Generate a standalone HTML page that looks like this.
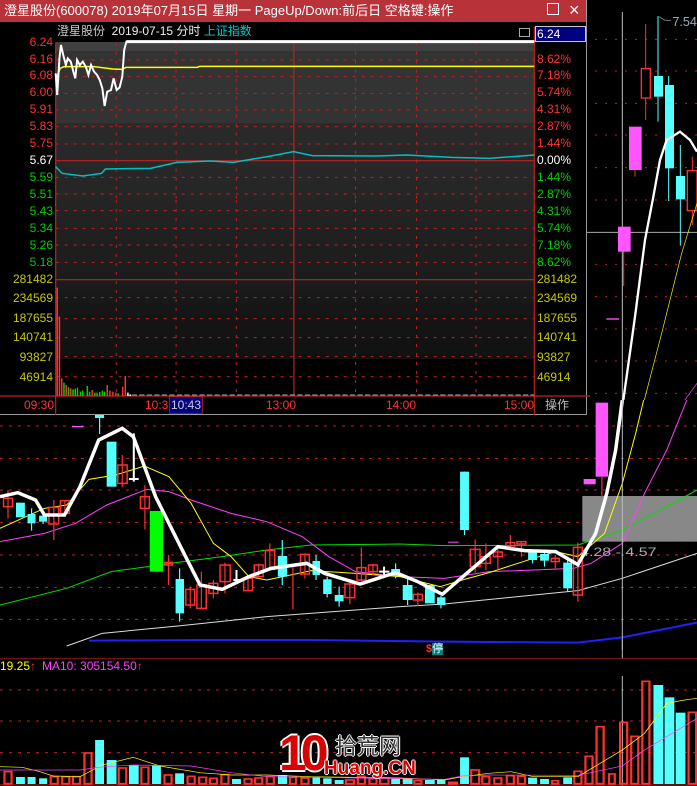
<!DOCTYPE html>
<html><head><meta charset="utf-8">
<style>
*{margin:0;padding:0;box-sizing:border-box}
body{width:697px;height:786px;background:#000;position:relative;overflow:hidden;font-family:"Liberation Sans","Noto Sans CJK SC",sans-serif;font-size:12px}
.a{position:absolute;white-space:nowrap;line-height:14px}
.l{left:0;width:53px;text-align:right}
.r{left:537px}
svg{position:absolute;overflow:hidden}
</style></head><body>

<svg style="left:0;top:400px" width="697" height="250" viewBox="0 0 1568 750" preserveAspectRatio="none">
<g stroke="#c02020" stroke-dasharray="3 6" stroke-width="1">
<path vector-effect="non-scaling-stroke" d="M0 78H1568M0 175H1568M0 270H1568M0 367H1568M0 465H1568M0 562H1568M0 658H1568"/>
</g>
<rect x="1310" y="288" width="258" height="137" fill="#888"/>
<text x="1305" y="468" fill="#aaa" font-size="36" font-family="Liberation Sans">4.28 - 4.57</text>
<g fill="none">
<polyline stroke="#ddd" stroke-width="1" vector-effect="non-scaling-stroke" points="150,738 230,700 400,678 600,650 900,620 1000,612 1300,572 1400,535 1568,460"/>
<polyline stroke="#2020ff" stroke-width="2" vector-effect="non-scaling-stroke" points="200,722 450,720 700,720 1000,725 1300,728 1400,712 1568,668"/>
<polyline stroke="#00e000" stroke-width="1" vector-effect="non-scaling-stroke" points="0,615 150,565 250,515 400,487 500,470 600,450 700,435 900,432 1000,437 1300,435 1400,390 1500,320 1568,270"/>
<polyline stroke="#ff40ff" stroke-width="1" vector-effect="non-scaling-stroke" points="0,425 100,400 170,370 240,315 330,268 380,275 430,300 520,340 600,365 680,410 740,470 800,515 900,530 1000,535 1100,515 1200,510 1290,505 1330,490 1400,430 1450,280 1500,150 1545,0"/>
<polyline stroke="#ffff00" stroke-width="1" vector-effect="non-scaling-stroke" points="0,385 100,325 150,315 200,238 260,225 325,198 380,230 430,310 480,430 520,470 560,530 600,540 700,512 800,520 900,530 990,560 1040,540 1100,518 1200,475 1250,455 1300,470 1360,400 1400,250 1430,100 1448,0"/>
</g>
<g stroke="#ff3030" stroke-width="1.2" fill="none">
<path vector-effect="non-scaling-stroke" d="M18 270V355M121 300V420M146 302V340M275 165V262M326 255V388M379 465V555M428 560V625M453 515V625M480 540V595M506 488V580M558 535V572M582 490V535M607 430V512M659 495V628M686 460V535M787 545V612M813 443V545M839 492V525M940 578V618M1069 418V518M1093 430V510M1120 440V510M1148 405V445M1173 425V470M1249 465V505M1300 428V605M1354 230V290"/>
<g stroke-width="1.5">
<rect vector-effect="non-scaling-stroke" x="8" y="295" width="20" height="25"/><rect vector-effect="non-scaling-stroke" x="110" y="322" width="22" height="50"/><rect vector-effect="non-scaling-stroke" x="136" y="302" width="20" height="38"/><rect vector-effect="non-scaling-stroke" x="265" y="195" width="21" height="55"/><rect vector-effect="non-scaling-stroke" x="316" y="290" width="20" height="35"/><rect vector-effect="non-scaling-stroke" x="370" y="487" width="18" height="8"/><rect vector-effect="non-scaling-stroke" x="418" y="568" width="20" height="47"/><rect vector-effect="non-scaling-stroke" x="443" y="555" width="21" height="70"/><rect vector-effect="non-scaling-stroke" x="470" y="550" width="20" height="30"/><rect vector-effect="non-scaling-stroke" x="495" y="495" width="23" height="50"/><rect vector-effect="non-scaling-stroke" x="548" y="535" width="20" height="37"/><rect vector-effect="non-scaling-stroke" x="572" y="495" width="20" height="35"/><rect vector-effect="non-scaling-stroke" x="597" y="452" width="21" height="56"/><rect vector-effect="non-scaling-stroke" x="676" y="463" width="20" height="59"/><rect vector-effect="non-scaling-stroke" x="776" y="552" width="22" height="41"/><rect vector-effect="non-scaling-stroke" x="803" y="503" width="20" height="37"/><rect vector-effect="non-scaling-stroke" x="829" y="495" width="20" height="20"/><rect vector-effect="non-scaling-stroke" x="930" y="583" width="20" height="17"/><rect vector-effect="non-scaling-stroke" x="1058" y="448" width="22" height="52"/><rect vector-effect="non-scaling-stroke" x="1083" y="470" width="20" height="20"/><rect vector-effect="non-scaling-stroke" x="1110" y="456" width="20" height="14"/><rect vector-effect="non-scaling-stroke" x="1138" y="428" width="20" height="10"/><rect vector-effect="non-scaling-stroke" x="1163" y="425" width="20" height="7"/><rect vector-effect="non-scaling-stroke" x="1240" y="475" width="18" height="10"/><rect vector-effect="non-scaling-stroke" x="1290" y="442" width="20" height="143"/>
</g></g>
<g stroke="#54ffff" stroke-width="1.2">
<path vector-effect="non-scaling-stroke" d="M71 325V392M97 335V372M224 45V102M404 505V665M635 420V555M711 465V540M736 530V592M763 560V620M890 490V535M917 530V615M992 588V625M1045 215V405M1198 450V490M1225 455V500M1277 480V575"/>
</g>
<g fill="#54ffff">
<rect x="36" y="308" width="20" height="44"/><rect x="62" y="342" width="18" height="28"/><rect x="88" y="347" width="18" height="18"/><rect x="214" y="45" width="20" height="7"/><rect x="240" y="125" width="22" height="135"/><rect x="395" y="537" width="19" height="103"/><rect x="625" y="468" width="21" height="62"/><rect x="703" y="483" width="17" height="42"/><rect x="727" y="538" width="19" height="44"/><rect x="753" y="585" width="20" height="19"/><rect x="880" y="507" width="20" height="21"/><rect x="906" y="555" width="22" height="45"/><rect x="956" y="555" width="22" height="55"/><rect x="983" y="592" width="19" height="23"/><rect x="1035" y="215" width="20" height="175"/><rect x="1188" y="455" width="20" height="25"/><rect x="1215" y="462" width="20" height="20"/><rect x="1267" y="488" width="20" height="77"/>
</g>
<rect x="337" y="333" width="30" height="182" fill="#00ff00"/>
<g fill="#ff55ff"><rect x="162" y="78" width="26" height="4"/><rect x="1008" y="425" width="24" height="3"/><rect x="1313" y="237" width="27" height="16"/><rect x="1340" y="8" width="28" height="222"/></g>
<path d="M290 237H312M301 100V245M525 540H540M532 510V548M853 515H876M864 500V530" stroke="#fff" stroke-width="2" vector-effect="non-scaling-stroke"/>
<polyline fill="none" stroke="#fff" stroke-width="3.5" vector-effect="non-scaling-stroke" points="0,290 40,278 80,300 100,345 145,345 180,260 222,120 275,85 300,110 350,290 410,450 450,555 500,568 560,530 610,505 690,490 730,520 810,552 890,518 940,545 995,583 1050,520 1120,440 1180,452 1250,455 1300,494 1340,400 1365,280 1385,150 1400,0"/>
<line x1="1400" y1="0" x2="1400" y2="750" stroke="#bbb" stroke-width="1" vector-effect="non-scaling-stroke"/>
</svg>

<svg style="left:585px;top:0" width="112" height="400" viewBox="0 0 336 1200" preserveAspectRatio="none">
<g stroke="#c02020" stroke-dasharray="2 8" stroke-width="1">
<path vector-effect="non-scaling-stroke" d="M0 118H336M0 213H336M0 310H336M0 405H336M0 503H336M0 600H336M0 793H336M0 890H336M0 987H336M0 1083H336M0 1180H336"/>
</g>
<line x1="0" y1="697" x2="336" y2="697" stroke="#aaa" stroke-width="1" vector-effect="non-scaling-stroke"/>
<line x1="112" y1="36" x2="112" y2="1200" stroke="#bbb" stroke-width="1" vector-effect="non-scaling-stroke"/>
<path d="M116 690V858M150 510V530M182 72V360M322 470V675" stroke="#ff3030" stroke-width="3"/>
<path d="M219 48V365M251 228V603M286 435V737" stroke="#54ffff" stroke-width="3"/>
<rect x="99" y="680" width="38" height="75" fill="#ff55ff"/>
<rect x="132" y="380" width="38" height="130" fill="#ff55ff"/>
<rect x="169" y="206" width="27" height="88" fill="#000" stroke="#ff3030" stroke-width="4"/>
<rect x="207" y="228" width="27" height="62" fill="#54ffff"/>
<rect x="240" y="255" width="27" height="250" fill="#54ffff"/>
<rect x="273" y="528" width="27" height="70" fill="#54ffff"/>
<rect x="307" y="512" width="29" height="120" fill="#000" stroke="#ff3030" stroke-width="4"/>
<rect x="64" y="955" width="38" height="4" fill="#ff55ff"/>
<polyline fill="none" stroke="#fff" stroke-width="7" points="115,1200 150,950 180,720 205,590 225,480 245,420 285,395 315,420 336,455"/>
<polyline fill="none" stroke="#ffff00" stroke-width="2" points="178,1200 230,1000 290,760 336,610"/>
<polyline fill="none" stroke="#ff40ff" stroke-width="2" points="300,1200 336,1150"/>
<text x="262" y="78" fill="#9ab" font-size="38" font-family="Liberation Sans">7.54</text>
<path d="M222 50L238 60L258 62" stroke="#9ab" fill="none" stroke-width="2"/>
</svg>

<svg style="left:0;top:640px" width="697" height="146" viewBox="0 0 1568 438" preserveAspectRatio="none">
<line x1="0" y1="55" x2="1568" y2="55" stroke="#c02020" stroke-width="2"/>
<g stroke="#c02020" stroke-dasharray="3 6"><path vector-effect="non-scaling-stroke" d="M0 150H1568M0 243H1568M0 338H1568"/></g>
<line x1="1400" y1="0" x2="1400" y2="55" stroke="#bbb" vector-effect="non-scaling-stroke"/>
<line x1="1400" y1="108" x2="1400" y2="438" stroke="#bbb" vector-effect="non-scaling-stroke"/>
<g fill="#54ffff">
<rect x="36" y="411" width="20" height="21"/><rect x="62" y="411" width="18" height="21"/><rect x="88" y="415" width="18" height="17"/><rect x="214" y="300" width="20" height="132"/><rect x="240" y="360" width="22" height="72"/><rect x="290" y="375" width="22" height="57"/><rect x="342" y="375" width="20" height="57"/><rect x="394" y="400" width="20" height="32"/><rect x="522" y="417" width="20" height="15"/><rect x="625" y="405" width="21" height="27"/><rect x="703" y="410" width="17" height="22"/><rect x="727" y="415" width="19" height="17"/><rect x="753" y="420" width="20" height="12"/><rect x="880" y="415" width="20" height="17"/><rect x="906" y="417" width="22" height="15"/><rect x="956" y="420" width="22" height="12"/><rect x="983" y="420" width="19" height="12"/><rect x="1035" y="352" width="20" height="80"/><rect x="1188" y="413" width="20" height="19"/><rect x="1215" y="417" width="20" height="15"/><rect x="1267" y="412" width="20" height="20"/><rect x="1470" y="135" width="22" height="297"/><rect x="1495" y="172" width="22" height="260"/><rect x="1520" y="218" width="22" height="214"/>
</g>
<g fill="none" stroke="#ff3030" stroke-width="5">
<rect x="10" y="395" width="16" height="36"/><rect x="114" y="410" width="16" height="21"/><rect x="140" y="410" width="16" height="21"/><rect x="164" y="410" width="16" height="21"/><rect x="190" y="339" width="16" height="92"/><rect x="267" y="384" width="17" height="47"/><rect x="318" y="382" width="16" height="49"/><rect x="370" y="405" width="16" height="26"/><rect x="422" y="409" width="16" height="22"/><rect x="448" y="412" width="16" height="19"/><rect x="472" y="415" width="16" height="16"/><rect x="498" y="404" width="16" height="27"/><rect x="550" y="417" width="16" height="14"/><rect x="574" y="414" width="16" height="17"/><rect x="600" y="410" width="16" height="21"/><rect x="652" y="412" width="14" height="19"/><rect x="678" y="414" width="16" height="17"/><rect x="778" y="420" width="18" height="11"/><rect x="805" y="409" width="16" height="22"/><rect x="831" y="416" width="16" height="15"/><rect x="855" y="414" width="19" height="17"/><rect x="932" y="422" width="16" height="9"/><rect x="1010" y="427" width="18" height="4"/><rect x="1060" y="390" width="18" height="41"/><rect x="1085" y="410" width="16" height="21"/><rect x="1112" y="414" width="16" height="17"/><rect x="1140" y="407" width="16" height="24"/><rect x="1165" y="409" width="16" height="22"/><rect x="1242" y="422" width="14" height="9"/><rect x="1292" y="394" width="16" height="37"/><rect x="1317" y="349" width="16" height="82"/><rect x="1342" y="260" width="16" height="171"/><rect x="1370" y="402" width="13" height="29"/><rect x="1395" y="247" width="16" height="184"/><rect x="1420" y="289" width="16" height="142"/><rect x="1445" y="124" width="16" height="307"/><rect x="1549" y="217" width="17" height="214"/>
</g>
<polyline fill="none" stroke="#ffff00" stroke-width="2" points="0,380 50,382 90,395 120,408 180,410 230,375 300,352 360,378 450,398 520,405 600,405 700,410 800,412 900,414 1000,420 1040,410 1100,400 1150,395 1200,410 1300,410 1350,370 1400,330 1450,280 1500,190 1540,180 1568,175"/>
<polyline fill="none" stroke="#ff40ff" stroke-width="2" points="0,390 180,390 220,382 300,375 430,378 520,398 600,410 700,412 800,414 1000,418 1040,408 1100,405 1300,406 1350,392 1400,378 1450,330 1500,290 1568,235"/>
<line x1="0" y1="435" x2="1568" y2="435" stroke="#c02020" stroke-width="3"/>
</svg>
<div class="a" style="left:0;top:659px;color:#ffff00">19.25<span style="color:#ff3030">↑</span></div>
<div class="a" style="left:42px;top:659px;color:#ff40ff">MA10: 305154.50<span style="color:#ff3030">↑</span></div>
<div class="a" style="left:426px;top:642px;font-size:11px"><span style="color:#ff3030;font-weight:bold">$</span><span style="background:#008080;color:#fff">停</span></div>

<div class="a" style="left:279px;top:728px;font-size:50px;line-height:50px;font-weight:bold;color:#d00;letter-spacing:-6px;text-shadow:2px 0 #fff,-2px 0 #fff,0 2px #fff,0 -2px #fff">10</div>
<div class="a" style="left:335px;top:735px;font-size:22px;line-height:24px;color:#333;text-shadow:1px 0 #fff,-1px 0 #fff,0 1px #fff,0 -1px #fff">拾荒网</div>
<div class="a" style="left:324px;top:759px;font-size:19px;line-height:20px;font-weight:bold;color:#d00;text-shadow:1px 0 #fff,-1px 0 #fff,0 1px #fff,0 -1px #fff">Huang.CN</div>

<div style="position:absolute;left:0;top:0;width:587px;height:415px;background:#000;border-right:1px solid #999;border-bottom:1px solid #999">
<div style="position:absolute;left:0;top:0;width:586px;height:22px;background:#b8323a"></div>
<div class="a" style="left:4px;top:3px;color:#fff;font-size:13px;line-height:16px">澄星股份(600078) 2019年07月15日 星期一 PageUp/Down:前后日 空格键:操作</div>
<div class="a" style="left:547px;top:3px;width:12px;height:12px;border:1px solid #fff"></div>
<div class="a" style="left:569px;top:0px;color:#fff;font-size:18px;line-height:20px">×</div>
<div class="a" style="left:57px;top:24px;color:#c8c8c8;font-size:12px">澄星股份&nbsp; <span style="color:#eee">2019-07-15 分时</span> <span style="color:#00c8c8">上证指数</span></div>
<div class="a" style="left:519px;top:28px;width:11px;height:9px;border:1px solid #aaa"></div>
<div style="position:absolute;left:56px;top:42px;width:478px;height:354px;background:linear-gradient(#404040 0,#404040 9px,#333 9px,#333 81px,#2a2a2a 81px,#262626 150px,#1f1f1f 200px,#1c1c1c 238px,#161616 266px,#111 317px,#000 317px)"></div>
<svg style="left:0;top:0" width="590" height="200" viewBox="0 0 1568 600" preserveAspectRatio="none">
<g stroke="#c02020" stroke-dasharray="3 6">
<path vector-effect="non-scaling-stroke" d="M148 180H1420M148 230H1420M148 280H1420M148 330H1420M148 380H1420M148 432H1420M148 532H1420M148 582H1420M309 128V600M468 128V600M628 128V600M945 128V600M1107 128V600M1265 128V600"/>
</g>
<path vector-effect="non-scaling-stroke" d="M148 482H1420M781 128V600M148 127V600M1420 80V600" stroke="#c02020" stroke-width="1.2"/>
<polyline fill="none" stroke="#00c0c0" stroke-width="1.5" vector-effect="non-scaling-stroke" points="148,500 165,520 220,528 270,520 280,507 400,505 470,487 560,483 620,487 720,468 780,455 830,467 1000,468 1080,465 1200,472 1300,475 1420,465"/>
<polyline fill="none" stroke="#ffff00" stroke-width="1.5" vector-effect="non-scaling-stroke" points="148,240 160,205 170,200 250,200 300,207 325,208 335,202 525,202 530,199 1420,199"/>
<polyline fill="none" stroke="#fff" stroke-width="2" vector-effect="non-scaling-stroke" points="148,220 152,285 158,175 162,135 168,165 175,195 180,175 188,185 195,215 200,235 205,180 212,195 220,185 228,200 235,225 242,195 250,215 258,225 265,240 272,265 278,318 285,275 295,270 302,235 310,270 318,262 325,230 330,150 336,125 1420,125"/>
<line x1="336" y1="125" x2="1420" y2="125" stroke="#fff" stroke-width="3" vector-effect="non-scaling-stroke"/>
</svg>
<svg style="left:0;top:200px" width="590" height="215" viewBox="0 0 1568 645" preserveAspectRatio="none">
<g stroke="#c02020" stroke-dasharray="3 6"><path vector-effect="non-scaling-stroke" d="M148 32H1420M148 85H1420M148 135H1420M148 187H1420M148 293H1420M148 356H1420M148 413H1420M148 470H1420M148 530H1420M309 0V588M468 0V588M628 0V588M945 0V588M1107 0V588M1265 0V588"/></g>
<path vector-effect="non-scaling-stroke" d="M148 239H1420M781 0V588M148 0V645M1420 0V645M0 588H1568" stroke="#c02020" stroke-width="1.2"/>
<g stroke="#ff3030" stroke-width="4"><path d="M152 588V263M158 588V350M164 588V535M176 588V555M188 588V565M245 588V570M285 588V555M292 588V572M300 588V575M308 588V578M333 588V528M326 588V560"/></g>
<g stroke="#00d000" stroke-width="4"><path d="M170 588V548M182 588V562M194 588V568M200 588V566M206 588V563M214 588V575M220 588V572M232 588V558M238 588V575M252 588V578M258 588V578M265 588V576M272 588V572M278 588V575M314 588V580"/></g>
<path d="M340 588V578M346 588V583" stroke="#fff" stroke-width="4"/>
<path d="M350 585H1420" stroke="#ddd" stroke-width="2" stroke-dasharray="14 6"/>
<rect x="450" y="590" width="88" height="50" fill="#000080" stroke="#c02020" stroke-width="2"/>
</svg>
<div class="a" style="left:535px;top:26px;width:51px;height:16px;background:#000080;border:1px solid #ccc;color:#fff;padding-left:1px;line-height:14px">6.24</div>

<div class="a l" style="top:35px;color:#ff3232">6.24</div>
<div class="a l" style="top:52px;color:#ff3232">6.16</div>
<div class="a l" style="top:68px;color:#ff3232">6.08</div>
<div class="a l" style="top:85px;color:#ff3232">6.00</div>
<div class="a l" style="top:102px;color:#ff3232">5.91</div>
<div class="a l" style="top:119px;color:#ff3232">5.83</div>
<div class="a l" style="top:136px;color:#ff3232">5.75</div>
<div class="a l" style="top:153px;color:#fff">5.67</div>
<div class="a l" style="top:170px;color:#00d000">5.59</div>
<div class="a l" style="top:187px;color:#00d000">5.51</div>
<div class="a l" style="top:204px;color:#00d000">5.43</div>
<div class="a l" style="top:221px;color:#00d000">5.34</div>
<div class="a l" style="top:238px;color:#00d000">5.26</div>
<div class="a l" style="top:255px;color:#00d000">5.18</div>
<div class="a l" style="top:272px;color:#c8c800">281482</div>
<div class="a l" style="top:291px;color:#c8c800">234569</div>
<div class="a l" style="top:311px;color:#c8c800">187655</div>
<div class="a l" style="top:330px;color:#c8c800">140741</div>
<div class="a l" style="top:350px;color:#c8c800">93827</div>
<div class="a l" style="top:370px;color:#c8c800">46914</div>

<div class="a r" style="top:52px;color:#ff3232">8.62%</div>
<div class="a r" style="top:68px;color:#ff3232">7.18%</div>
<div class="a r" style="top:85px;color:#ff3232">5.74%</div>
<div class="a r" style="top:102px;color:#ff3232">4.31%</div>
<div class="a r" style="top:119px;color:#ff3232">2.87%</div>
<div class="a r" style="top:136px;color:#ff3232">1.44%</div>
<div class="a r" style="top:153px;color:#fff">0.00%</div>
<div class="a r" style="top:170px;color:#00d000">1.44%</div>
<div class="a r" style="top:187px;color:#00d000">2.87%</div>
<div class="a r" style="top:204px;color:#00d000">4.31%</div>
<div class="a r" style="top:221px;color:#00d000">5.74%</div>
<div class="a r" style="top:238px;color:#00d000">7.18%</div>
<div class="a r" style="top:255px;color:#00d000">8.62%</div>
<div class="a r" style="top:272px;color:#c8c800">281482</div>
<div class="a r" style="top:291px;color:#c8c800">234569</div>
<div class="a r" style="top:311px;color:#c8c800">187655</div>
<div class="a r" style="top:330px;color:#c8c800">140741</div>
<div class="a r" style="top:350px;color:#c8c800">93827</div>
<div class="a r" style="top:370px;color:#c8c800">46914</div>

<div class="a" style="left:24px;top:398px;color:#ff3232">09:30</div>
<div class="a" style="left:145px;top:398px;color:#ff3232">10:3</div>
<div class="a" style="left:171px;top:398px;color:#ccc">10:43</div>
<div class="a" style="left:266px;top:398px;color:#ff3232">13:00</div>
<div class="a" style="left:386px;top:398px;color:#ff3232">14:00</div>
<div class="a" style="left:504px;top:398px;color:#ff3232">15:00</div>
<div class="a" style="left:545px;top:398px;color:#bbb">操作</div>
</div>
<div style="position:absolute;left:95px;top:415px;width:9px;height:3px;background:#54ffff"></div>
</body></html>
